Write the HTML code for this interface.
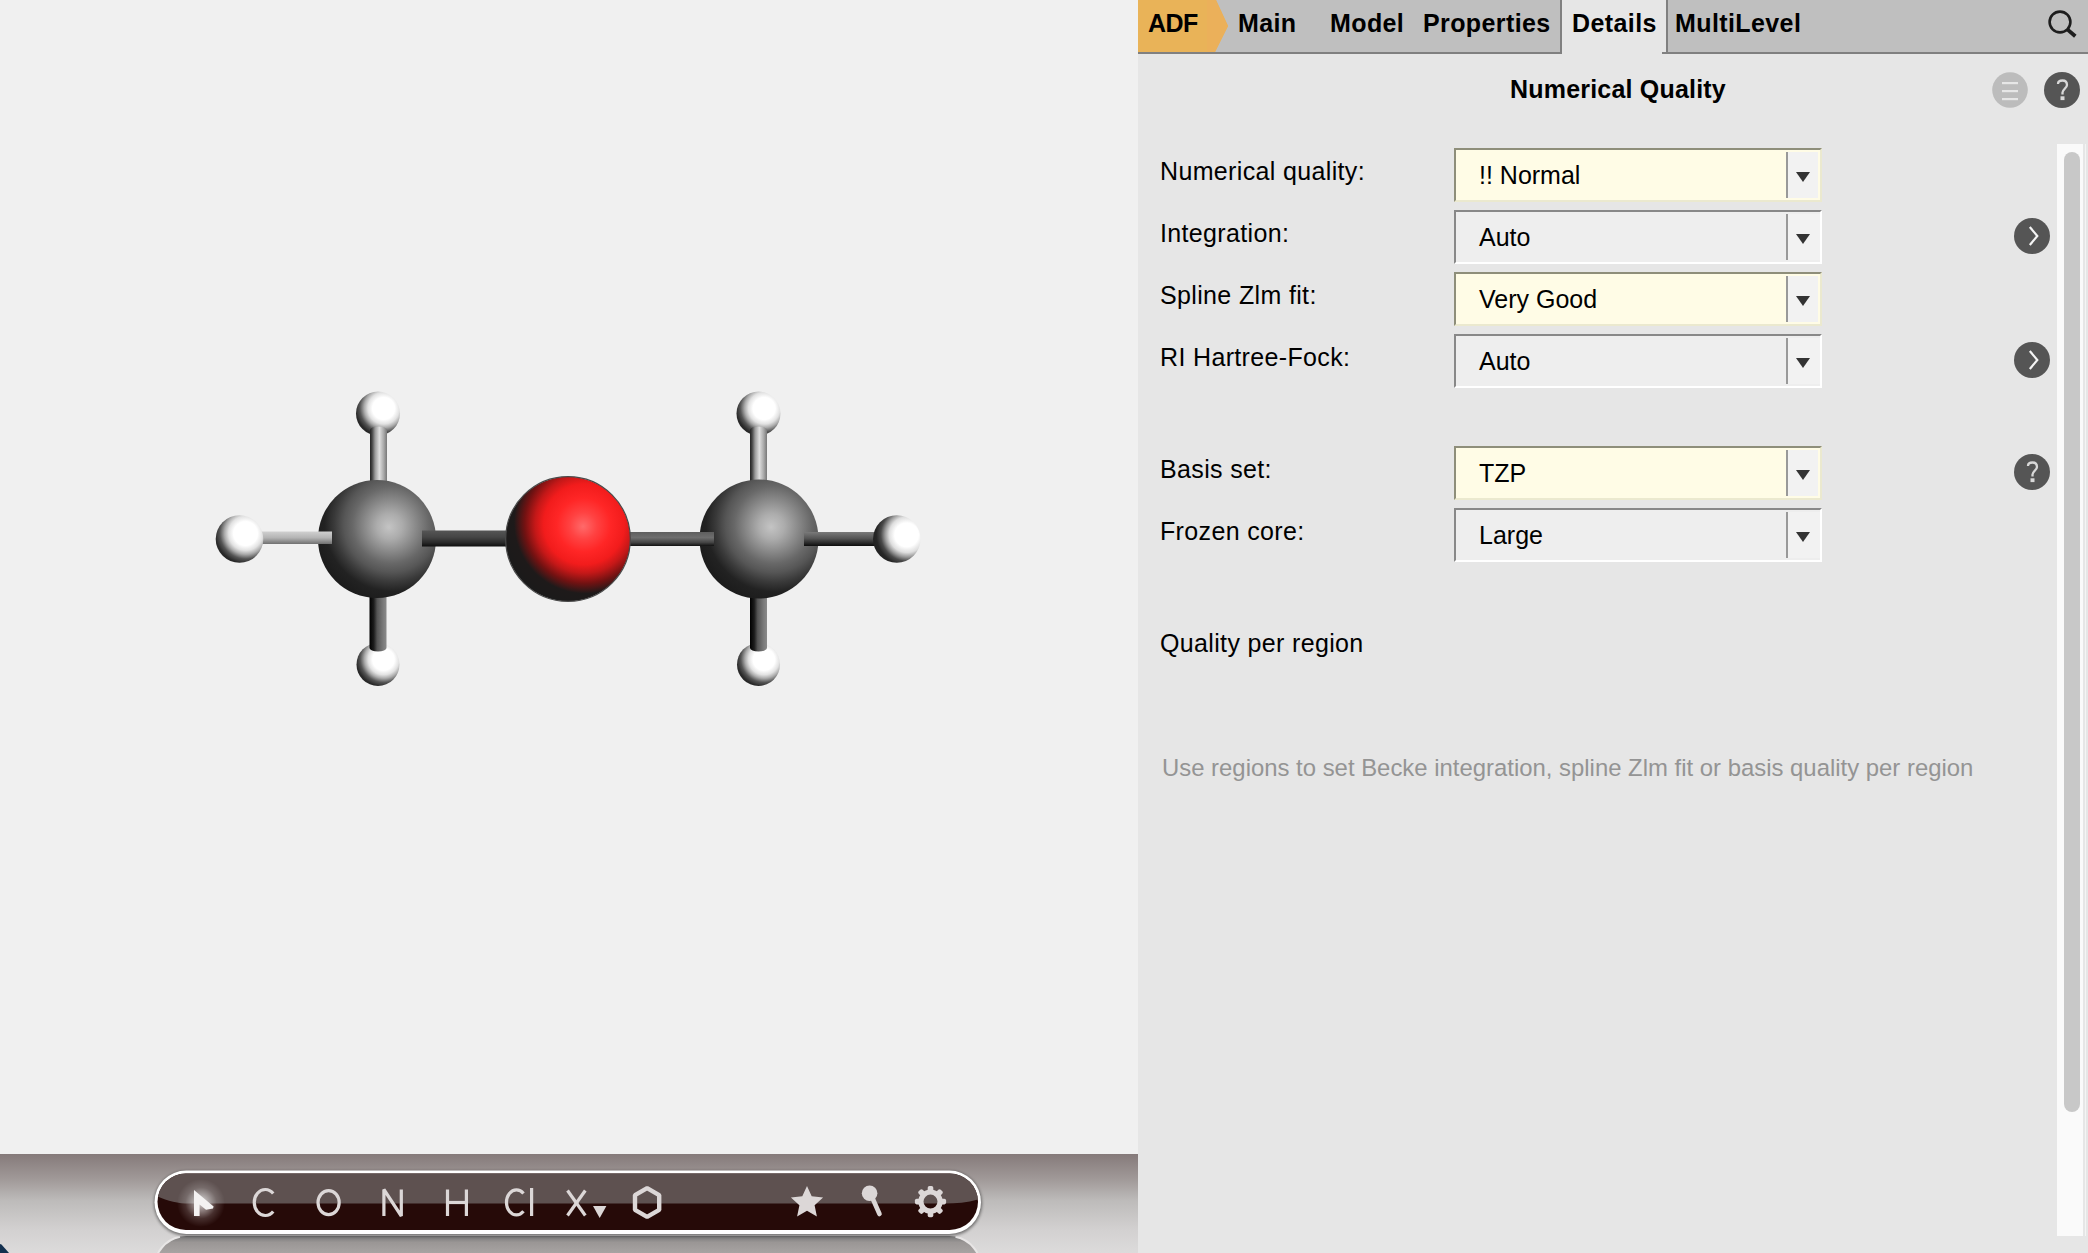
<!DOCTYPE html>
<html><head><meta charset="utf-8">
<style>
html,body{margin:0;padding:0;width:2088px;height:1253px;overflow:hidden;background:#e6e6e6;}
*{box-sizing:border-box;}
.abs{position:absolute;}
.t{position:absolute;font-family:"Liberation Sans",sans-serif;white-space:nowrap;line-height:1;color:#000;}
.lbl{font-size:25px;letter-spacing:0.35px;}
.b{font-weight:bold;}
.combo{position:absolute;left:1454px;width:368px;height:54px;border-top:2px solid #888;border-left:2px solid #888;border-bottom:2px solid #fff;border-right:2px solid #fff;background:#eeeeee;}
.combo.y{background:#fffce6;border-top-color:#8e8e7a;border-left-color:#8e8e7a;border-bottom-color:#ebe9cf;border-right-color:#ebe9cf;}
.combo .btn{position:absolute;left:330px;top:2px;width:34px;height:46px;background:#f2f2f2;border-left:2px solid #999;}
.combo.y .btn{width:32px;}
.combo .tri{position:absolute;left:8px;top:20px;width:0;height:0;border-left:7px solid transparent;border-right:7px solid transparent;border-top:10px solid #333;}
.combo .val{position:absolute;left:23px;top:0;font-family:"Liberation Sans",sans-serif;font-size:25px;line-height:1;white-space:nowrap;}
</style></head><body>
<!-- left 3D viewport -->
<div class="abs" style="left:0;top:0;width:1138px;height:1154px;background:#f0f0f0;"></div>
<!-- molecule -->
<svg class="abs" style="left:0;top:0" width="1138" height="1154">
<defs>
<radialGradient id="gC" cx="0.64" cy="0.36" r="0.72" fx="0.6" fy="0.4">
<stop offset="0" stop-color="#c4c4c4"/><stop offset="0.15" stop-color="#acacac"/><stop offset="0.3" stop-color="#8a8a8a"/><stop offset="0.45" stop-color="#686868"/><stop offset="0.56" stop-color="#565656"/><stop offset="0.68" stop-color="#3a3a3a"/><stop offset="0.8" stop-color="#222"/><stop offset="1" stop-color="#1a1a1a"/>
</radialGradient>
<radialGradient id="gO" cx="0.64" cy="0.36" r="0.72" fx="0.62" fy="0.4">
<stop offset="0" stop-color="#ff6a6a"/><stop offset="0.15" stop-color="#ff4242"/><stop offset="0.3" stop-color="#ff2626"/><stop offset="0.45" stop-color="#f21c1c"/><stop offset="0.55" stop-color="#c41818"/><stop offset="0.67" stop-color="#721212"/><stop offset="0.79" stop-color="#1e1a1a"/><stop offset="1" stop-color="#1a1a1a"/>
</radialGradient>
<radialGradient id="gH" cx="0.64" cy="0.36" r="0.72" fx="0.62" fy="0.4">
<stop offset="0" stop-color="#ffffff"/><stop offset="0.35" stop-color="#ffffff"/><stop offset="0.5" stop-color="#e2e2e2"/><stop offset="0.62" stop-color="#ababab"/><stop offset="0.76" stop-color="#555"/><stop offset="0.9" stop-color="#2a2a2a"/><stop offset="1" stop-color="#222"/>
</radialGradient>
<linearGradient id="bTop" x1="0" y1="0" x2="1" y2="0"><stop offset="0" stop-color="#222"/><stop offset="0.12" stop-color="#444"/><stop offset="0.3" stop-color="#9a9a9a"/><stop offset="0.55" stop-color="#dedede"/><stop offset="0.8" stop-color="#aaa"/><stop offset="1" stop-color="#777"/></linearGradient>
<linearGradient id="bBot" x1="0" y1="0" x2="1" y2="0"><stop offset="0" stop-color="#000"/><stop offset="0.25" stop-color="#1c1c1c"/><stop offset="0.45" stop-color="#555"/><stop offset="0.8" stop-color="#7a7a7a"/><stop offset="1" stop-color="#8a8a8a"/></linearGradient>
<linearGradient id="bL" x1="0" y1="0" x2="0" y2="1"><stop offset="0" stop-color="#d0d0d0"/><stop offset="0.5" stop-color="#b4b4b4"/><stop offset="1" stop-color="#707070"/></linearGradient>
<linearGradient id="bR" x1="0" y1="0" x2="0" y2="1"><stop offset="0" stop-color="#7a7a7a"/><stop offset="0.45" stop-color="#555"/><stop offset="1" stop-color="#0c0c0c"/></linearGradient>
<linearGradient id="bCO" x1="0" y1="0" x2="0" y2="1"><stop offset="0" stop-color="#555"/><stop offset="0.4" stop-color="#464646"/><stop offset="0.75" stop-color="#2a2a2a"/><stop offset="1" stop-color="#0e0e0e"/></linearGradient>
<linearGradient id="bOC" x1="0" y1="0" x2="0" y2="1"><stop offset="0" stop-color="#5e5e5e"/><stop offset="0.4" stop-color="#6e6e6e"/><stop offset="0.75" stop-color="#444"/><stop offset="1" stop-color="#111"/></linearGradient>
<radialGradient id="gH2" cx="0.74" cy="0.4" r="0.78" fx="0.69" fy="0.42">
<stop offset="0" stop-color="#ffffff"/><stop offset="0.32" stop-color="#ffffff"/><stop offset="0.48" stop-color="#dedede"/><stop offset="0.6" stop-color="#9a9a9a"/><stop offset="0.72" stop-color="#4a4a4a"/><stop offset="0.85" stop-color="#262626"/><stop offset="1" stop-color="#202020"/>
</radialGradient>
</defs>
<!-- top/bottom hydrogens (behind bonds) -->
<circle cx="378" cy="413.5" r="22" fill="url(#gH)"/>
<circle cx="378" cy="664.5" r="21.5" fill="url(#gH)"/>
<circle cx="758.5" cy="413.5" r="22" fill="url(#gH)"/>
<circle cx="758.5" cy="664.5" r="21.5" fill="url(#gH)"/>
<!-- vertical bonds (behind carbons) -->
<path d="M370,494 L370,430 A8.5,3.5 0 0 1 387,430 L387,494 Z" fill="url(#bTop)"/>
<path d="M369.5,585 L369.5,648 A8.5,3.5 0 0 0 386.5,648 L386.5,585 Z" fill="url(#bBot)"/>
<path d="M750,494 L750,430 A8.5,3.5 0 0 1 767,430 L767,494 Z" fill="url(#bTop)"/>
<path d="M750,585 L750,648 A8.5,3.5 0 0 0 767,648 L767,585 Z" fill="url(#bBot)"/>
<!-- carbons -->
<circle cx="377" cy="539" r="59" fill="url(#gC)"/>
<circle cx="759" cy="539" r="59.5" fill="url(#gC)"/>
<!-- horizontal bonds -->
<rect x="250" y="531.5" width="82" height="12.5" fill="url(#bL)"/>
<rect x="804" y="532" width="80" height="14" fill="url(#bR)"/>
<rect x="422" y="530.5" width="90" height="16" fill="url(#bCO)"/>
<rect x="624" y="532" width="90" height="14" fill="url(#bOC)"/>
<!-- oxygen -->
<circle cx="568" cy="539" r="62.3" fill="url(#gO)" stroke="#4a4a4a" stroke-width="1.2"/>
<!-- hydrogens -->
<circle cx="239.5" cy="539" r="23.8" fill="url(#gH)"/>
<circle cx="896.8" cy="539" r="23.8" fill="url(#gH2)"/>
</svg>
<!-- toolbar background -->
<div class="abs" style="left:0;top:1154px;width:1138px;height:99px;background:linear-gradient(#857a7a 0%,#a19a99 26%,#bdbbba 47%,#d3d1d1 77%,#dcdbdb 100%);"></div>

<!-- toolbar -->
<svg class="abs" style="left:0;top:1154px" width="1138" height="99" viewBox="0 1154 1138 99">
<defs>
<filter id="blur2" x="-5%" y="-50%" width="110%" height="200%"><feGaussianBlur stdDeviation="1.6"/></filter>
<radialGradient id="glow" cx="0.5" cy="0.5" r="0.5"><stop offset="0" stop-color="#fff" stop-opacity="0.8"/><stop offset="0.3" stop-color="#fff" stop-opacity="0.5"/><stop offset="0.65" stop-color="#fff" stop-opacity="0.15"/><stop offset="1" stop-color="#fff" stop-opacity="0"/></radialGradient>
<clipPath id="pillclip"><rect x="157.5" y="1173.5" width="820.5" height="56.5" rx="28.25"/></clipPath>
<linearGradient id="refl" x1="0" y1="0" x2="0" y2="1"><stop offset="0" stop-color="#777"/><stop offset="0.1" stop-color="#9a9695"/><stop offset="0.3" stop-color="#aaa6a5"/><stop offset="1" stop-color="#b0acab"/></linearGradient>
</defs>
<!-- reflection -->
<rect x="154.5" y="1236" width="826.5" height="64" rx="31.75" fill="url(#refl)"/><path d="M180,1236.8 A31.75,31.75 0 0 0 154.5,1267.75 M955.5,1236.8 A31.75,31.75 0 0 1 981,1267.75" fill="none" stroke="#e8e6e6" stroke-width="2"/>
<!-- shadow -->
<rect x="154" y="1171" width="828" height="65" rx="32.5" fill="#000" opacity="0.45" filter="url(#blur2)"/>
<!-- outline -->
<rect x="154.5" y="1170.5" width="826.5" height="63.5" rx="31.75" fill="#fff"/>
<!-- inner -->
<rect x="157.5" y="1173.5" width="820.5" height="56.5" rx="28.25" fill="#260a08"/>
<g clip-path="url(#pillclip)">
<path d="M150,1160 L990,1160 L990,1195 C975,1202 960,1203.5 945,1203.5 L190,1203.5 C175,1203.5 165,1200 150,1193 Z" fill="#5e5150"/>
</g>
<!-- glow behind cursor -->
<circle cx="201" cy="1203" r="24" fill="url(#glow)"/>
<g fill="#dcd7d7" stroke="none">
<polygon points="194,1190 213.6,1206.6 213,1208.6 206,1209.7 199.6,1204.5 199.6,1216 194,1216" fill="#f4f2f2"/>
</g>
<g fill="none" stroke="#dcd7d7" stroke-width="3.2" stroke-linejoin="bevel">
<!-- C -->
<path d="M273.2,1193.5 A11,13 0 1 0 273.2,1211.5"/>
<!-- O -->
<ellipse cx="328.6" cy="1202.6" rx="10.6" ry="12"/>
<!-- N -->
<polyline points="383.9,1216 383.9,1189.5 401.3,1216 401.3,1189.5"/>
<!-- H -->
<line x1="447.5" y1="1189.5" x2="447.5" y2="1216"/><line x1="466.4" y1="1189.5" x2="466.4" y2="1216"/><line x1="447.5" y1="1202.5" x2="466.4" y2="1202.5"/>
<!-- Cl -->
<path d="M523.5,1193.5 A10,12.5 0 1 0 523.5,1211.3"/>
<line x1="531.6" y1="1188" x2="531.6" y2="1216"/>
<!-- X -->
<line x1="567.5" y1="1190.5" x2="585.3" y2="1215.5"/><line x1="585.3" y1="1190.5" x2="567.5" y2="1215.5"/>
<!-- hexagon -->
<polygon points="647.1,1188.2 659.2,1195.1 659.2,1209.9 647.1,1216.9 635,1209.9 635,1195.1" stroke-width="4.4"/>
<!-- gear ring -->
<circle cx="930.5" cy="1201.6" r="9.6" stroke-width="5.2"/>
<!-- pin stick -->
<line x1="872" y1="1197" x2="879.5" y2="1214" stroke-width="4.6" stroke-linecap="round"/>
</g>
<g fill="#dcd7d7">
<polygon points="593,1206 606.4,1206 599.7,1218"/>
<!-- star -->
<polygon points="807.0,1185.9 811.7,1196.3 823.1,1197.6 814.6,1205.3 816.9,1216.5 807.0,1210.8 797.1,1216.5 799.4,1205.3 790.9,1197.6 802.3,1196.3"/>
<!-- pin head -->
<circle cx="869.6" cy="1193.3" r="7.8"/>
<!-- gear teeth -->
<g transform="translate(930.5,1201.6)">
<rect x="-2.8" y="-15.6" width="5.6" height="6" rx="1.8"/>
<rect x="-2.8" y="-15.6" width="5.6" height="6" rx="1.8" transform="rotate(45)"/>
<rect x="-2.8" y="-15.6" width="5.6" height="6" rx="1.8" transform="rotate(90)"/>
<rect x="-2.8" y="-15.6" width="5.6" height="6" rx="1.8" transform="rotate(135)"/>
<rect x="-2.8" y="-15.6" width="5.6" height="6" rx="1.8" transform="rotate(180)"/>
<rect x="-2.8" y="-15.6" width="5.6" height="6" rx="1.8" transform="rotate(225)"/>
<rect x="-2.8" y="-15.6" width="5.6" height="6" rx="1.8" transform="rotate(270)"/>
<rect x="-2.8" y="-15.6" width="5.6" height="6" rx="1.8" transform="rotate(315)"/>
</g>
</g>
</svg>

<svg class="abs" style="left:0;top:1240px" width="20" height="13"><polygon points="0,4 1.5,4.5 9,13 0,13" fill="#13304f"/></svg>
<!-- right panel -->
<div class="abs" style="left:1138px;top:0;width:950px;height:1253px;background:#e6e6e6;"></div>
<!-- tab bar -->
<div class="abs" style="left:1138px;top:0;width:950px;height:52px;background:#bfbfbf;"></div>
<div class="abs" style="left:1138px;top:52px;width:950px;height:2px;background:#808080;"></div>
<!-- ADF orange arrow -->
<svg class="abs" style="left:1138px;top:0" width="100" height="54"><polygon points="0,0 78,0 90,26 77,52 0,52" fill="#e9b358"/><polygon points="69,0 78,0 90,26 77,52 69,52" fill="#ebb05a"/></svg>
<!-- Details active tab -->
<div class="abs" style="left:1560px;top:0;width:108px;height:54px;background:#e6e6e6;border-left:2px solid #808080;border-right:2px solid #808080;"></div>
<div class="abs" style="left:1662px;top:52px;width:6px;height:2px;background:#808080;"></div>

<div class="t b" style="left:1148px;top:11px;font-size:25px;letter-spacing:-0.5px;">ADF</div>
<div class="t b" style="left:1238px;top:11px;font-size:25px;letter-spacing:0.4px;">Main</div>
<div class="t b" style="left:1330px;top:11px;font-size:25px;letter-spacing:0.4px;">Model</div>
<div class="t b" style="left:1423px;top:11px;font-size:25px;letter-spacing:0.4px;">Properties</div>
<div class="t b" style="left:1572px;top:11px;font-size:25px;letter-spacing:0.4px;">Details</div>
<div class="t b" style="left:1675px;top:11px;font-size:25px;letter-spacing:0.4px;">MultiLevel</div>

<!-- search icon -->
<svg class="abs" style="left:2040px;top:0" width="48" height="52"><circle cx="20" cy="22" r="10.4" fill="none" stroke="#1e1e1e" stroke-width="2.6"/><line x1="27.6" y1="29.6" x2="35.3" y2="36.3" stroke="#1e1e1e" stroke-width="3.8" stroke-linecap="butt"/></svg>

<!-- header -->
<div class="t b" style="left:1510px;top:77px;font-size:25px;letter-spacing:0.2px;">Numerical Quality</div>
<svg class="abs" style="left:1990px;top:70px" width="96" height="40">
  <circle cx="20" cy="20" r="17.8" fill="#bcbcbc"/>
  <rect x="12" y="12" width="16" height="2.2" fill="#e6e6e6"/><rect x="12" y="20" width="16" height="2.2" fill="#e6e6e6"/><rect x="12" y="28" width="16" height="2.2" fill="#e6e6e6"/>
  <circle cx="72" cy="20" r="18" fill="#555"/><path d="M68,14 C68,11.5 70,10.5 72.5,10.5 C75.5,10.5 77,12.5 77,15 C77,18 72.5,19.5 72.5,22.5 L72.5,24.5" fill="none" stroke="#d8d8d8" stroke-width="2.3"/><rect x="70.5" y="26.3" width="4" height="3.8" fill="#d8d8d8"/>
</svg>


<!-- form labels -->
<div class="t lbl" style="left:1160px;top:159px;">Numerical quality:</div>
<div class="t lbl" style="left:1160px;top:221px;">Integration:</div>
<div class="t lbl" style="left:1160px;top:283px;">Spline Zlm fit:</div>
<div class="t lbl" style="left:1160px;top:345px;">RI Hartree-Fock:</div>
<div class="t lbl" style="left:1160px;top:457px;">Basis set:</div>
<div class="t lbl" style="left:1160px;top:519px;">Frozen core:</div>
<div class="t lbl" style="left:1160px;top:631px;">Quality per region</div>
<!-- combos -->
<div class="combo y" style="top:148px;"><div class="val" style="top:13px;">!! Normal</div><div class="btn"><div class="tri"></div></div></div>
<div class="combo" style="top:210px;"><div class="val" style="top:13px;">Auto</div><div class="btn"><div class="tri"></div></div></div>
<div class="combo y" style="top:272px;"><div class="val" style="top:13px;">Very Good</div><div class="btn"><div class="tri"></div></div></div>
<div class="combo" style="top:334px;"><div class="val" style="top:13px;">Auto</div><div class="btn"><div class="tri"></div></div></div>
<div class="combo y" style="top:446px;"><div class="val" style="top:13px;">TZP</div><div class="btn"><div class="tri"></div></div></div>
<div class="combo" style="top:508px;"><div class="val" style="top:13px;">Large</div><div class="btn"><div class="tri"></div></div></div>
<!-- side icons -->
<svg class="abs" style="left:2010px;top:214px" width="44" height="44"><circle cx="22" cy="22" r="18" fill="#555"/><polyline points="19.8,13 27.3,22 19.8,31" fill="none" stroke="#f4f4f4" stroke-width="2.2"/></svg>
<svg class="abs" style="left:2010px;top:338px" width="44" height="44"><circle cx="22" cy="22" r="18" fill="#555"/><polyline points="19.8,13 27.3,22 19.8,31" fill="none" stroke="#f4f4f4" stroke-width="2.2"/></svg>
<svg class="abs" style="left:2010px;top:450px" width="44" height="44"><circle cx="22" cy="22" r="18" fill="#555"/><path d="M18,16 C18,13.5 20,12.5 22.5,12.5 C25.5,12.5 27,14.5 27,17 C27,20 22.5,21.5 22.5,24.5 L22.5,26.5" fill="none" stroke="#d8d8d8" stroke-width="2.3"/><rect x="20.5" y="28.3" width="4" height="3.8" fill="#d8d8d8"/></svg>
<!-- hint -->
<div class="t" style="left:1162px;top:756px;font-size:23.9px;color:#949494;">Use regions to set Becke integration, spline Zlm fit or basis quality per region</div>
<!-- scrollbar -->
<div class="abs" style="left:2057px;top:144px;width:26px;height:1092px;background:#fafafa;"></div>
<div class="abs" style="left:2085px;top:144px;width:1px;height:1092px;background:#f4f4f4;"></div>
<div class="abs" style="left:2064px;top:152px;width:16px;height:960px;border-radius:8px;background:#c8c8c8;"></div>
</body></html>
